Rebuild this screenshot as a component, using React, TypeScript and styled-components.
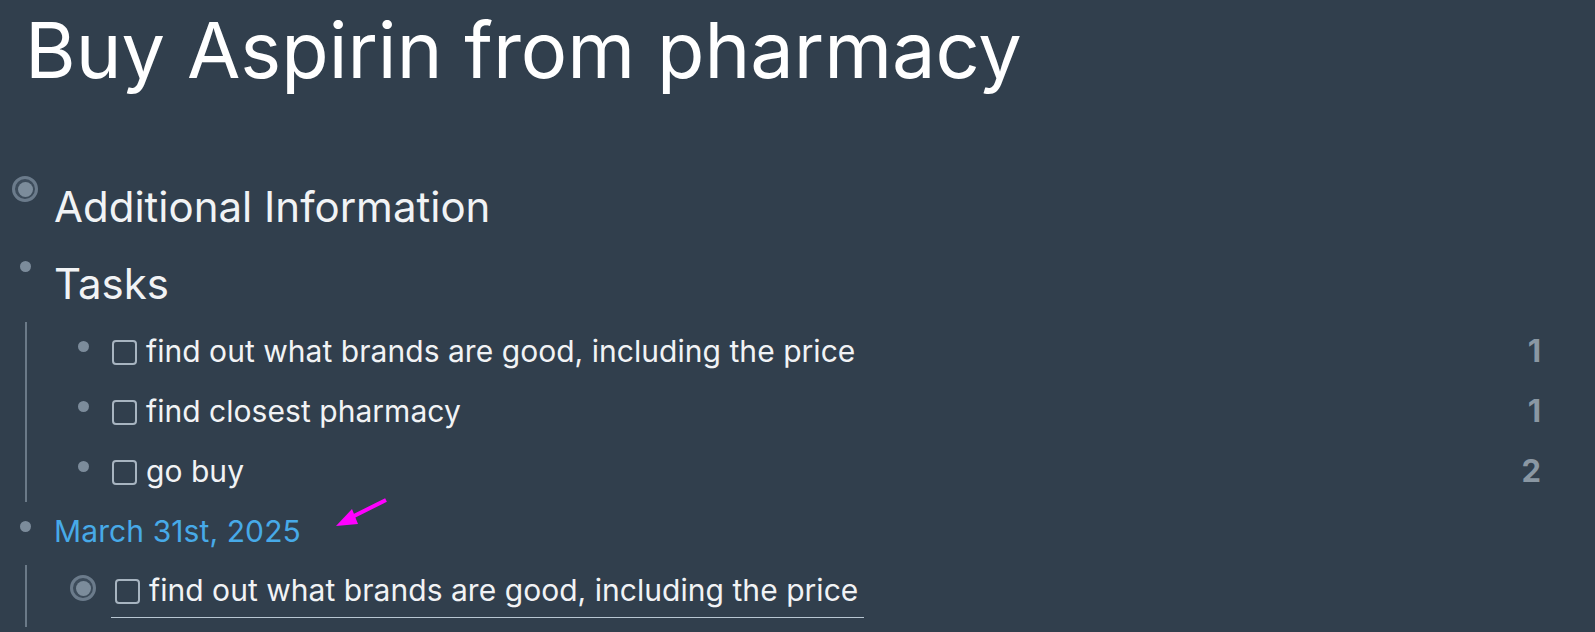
import React from 'react';
import styled, { createGlobalStyle } from 'styled-components';

const GlobalStyle = createGlobalStyle`
	html, body {
		margin: 0;
		padding: 0;
		background: #313f4d;
	}
	body {
		font-family: Inter, 'Noto Sans', sans-serif;
		color: #f1f3f5;
	}
`;

type TaskItem = {
	text: string;
	refs?: number;
};

const tasks: TaskItem[] = [
	{ text: 'find out what brands are good, including the price', refs: 1 },
	{ text: 'find closest pharmacy', refs: 1 },
	{ text: 'go buy', refs: 2 },
];

const Bullet: React.FC<{ closed?: boolean }> = ({ closed }) => (
	<BulletCell>{closed ? <Halo><Dot /></Halo> : <Dot small />}</BulletCell>
);

const App: React.FC = () => {
	return (
		<Page>
			<GlobalStyle />
			<Title>Buy Aspirin from pharmacy</Title>
			<Blocks>
				<Block>
					<Bullet closed />
					<Heading>Additional Information</Heading>
				</Block>
				<Block>
					<Bullet />
					<Heading>Tasks</Heading>
				</Block>
				<Children>
					{tasks.map((t) => (
						<TaskRow key={t.text}>
							<Bullet />
							<TaskBody>
								<Checkbox />
								<TaskText>{t.text}</TaskText>
							</TaskBody>
							{t.refs !== undefined && <RefCount>{t.refs}</RefCount>}
						</TaskRow>
					))}
				</Children>
				<TaskRow>
					<Bullet />
					<DateLink>March 31st, 2025</DateLink>
					<Arrow width="70" height="40" viewBox="0 0 70 40">
						<line x1="58" y1="3" x2="20" y2="22" stroke="#ff00ff" strokeWidth="4" />
						<polygon points="8,29 24,12 30,27" fill="#ff00ff" />
					</Arrow>
				</TaskRow>
				<Children last>
					<TaskRow>
						<Bullet closed />
						<EditingBody>
							<Checkbox />
							<TaskText>find out what brands are good, including the price</TaskText>
						</EditingBody>
					</TaskRow>
				</Children>
			</Blocks>
		</Page>
	);
};

export default App;

const Page = styled.div`
	width: 1595px;
	height: 632px;
	overflow: hidden;
	box-sizing: border-box;
	position: relative;
`;

const Title = styled.h1`
	margin: 2px 0 0 25px;
	font-size: 77.5px;
	font-weight: 400;
	line-height: 96px;
	color: #ffffff;
`;

const Blocks = styled.div`
	margin-top: 70px;
	display: flex;
	flex-direction: column;
`;

const Block = styled.div`
	display: flex;
	align-items: flex-start;
	height: 77px;
`;

const BulletCell = styled.div`
	width: 50px;
	height: 42px;
	flex-shrink: 0;
	display: flex;
	align-items: center;
	justify-content: center;
	margin-right: 4px;
`;

const Halo = styled.span`
	width: 26px;
	height: 26px;
	border-radius: 50%;
	box-sizing: border-box;
	border: 3px solid #6b7b8b;
	background: #3d4c5b;
	display: flex;
	align-items: center;
	justify-content: center;
`;

const Dot = styled.span<{ small?: boolean }>`
	width: ${(p) => (p.small ? 11 : 15)}px;
	height: ${(p) => (p.small ? 11 : 15)}px;
	border-radius: 50%;
	background: #7c8c9b;
`;

const Heading = styled.div`
	font-size: 42px;
	line-height: 77px;
	font-weight: 400;
	white-space: nowrap;
`;

const Children = styled.div<{ last?: boolean }>`
	margin-left: 25px;
	border-left: 2px solid #6b7a88;
	padding-left: 31px;
	padding-top: ${(p) => (p.last ? 2 : 3)}px;
	height: ${(p) => (p.last ? 'auto' : '177px')};
	margin-bottom: ${(p) => (p.last ? 0 : 3)}px;
`;

const TaskRow = styled.div`
	display: flex;
	align-items: flex-start;
	height: 60px;
	position: relative;
`;

const TaskBody = styled.div`
	display: flex;
	align-items: center;
	height: 60px;
	margin-top: -4px;
	flex: 1;
`;

const EditingBody = styled(TaskBody)`
	flex: none;
	padding-left: 4px;
	margin-left: -1px;
	padding-right: 6px;
	border-bottom: 1.5px solid #b8c6d2;
	height: 54px;
`;

const Checkbox = styled.span`
	width: 21px;
	height: 21px;
	border: 2px solid #a7b4c0;
	border-radius: 4px;
	margin-right: 9px;
	flex-shrink: 0;
	margin-top: 2px;
`;

const TaskText = styled.span`
	font-size: 30px;
	line-height: 60px;
	white-space: nowrap;
	letter-spacing: 0.04px;
`;

const RefCount = styled.span`
	font-size: 31px;
	font-weight: 700;
	color: #8a97a3;
	margin-right: 54px;
	line-height: 52px;
`;

const DateLink = styled.span`
	font-size: 30px;
	line-height: 52px;
	color: #47aae8;
	white-space: nowrap;
	letter-spacing: 0.1px;
`;

const Arrow = styled.svg`
	position: absolute;
	left: 328px;
	top: -8px;
`;
